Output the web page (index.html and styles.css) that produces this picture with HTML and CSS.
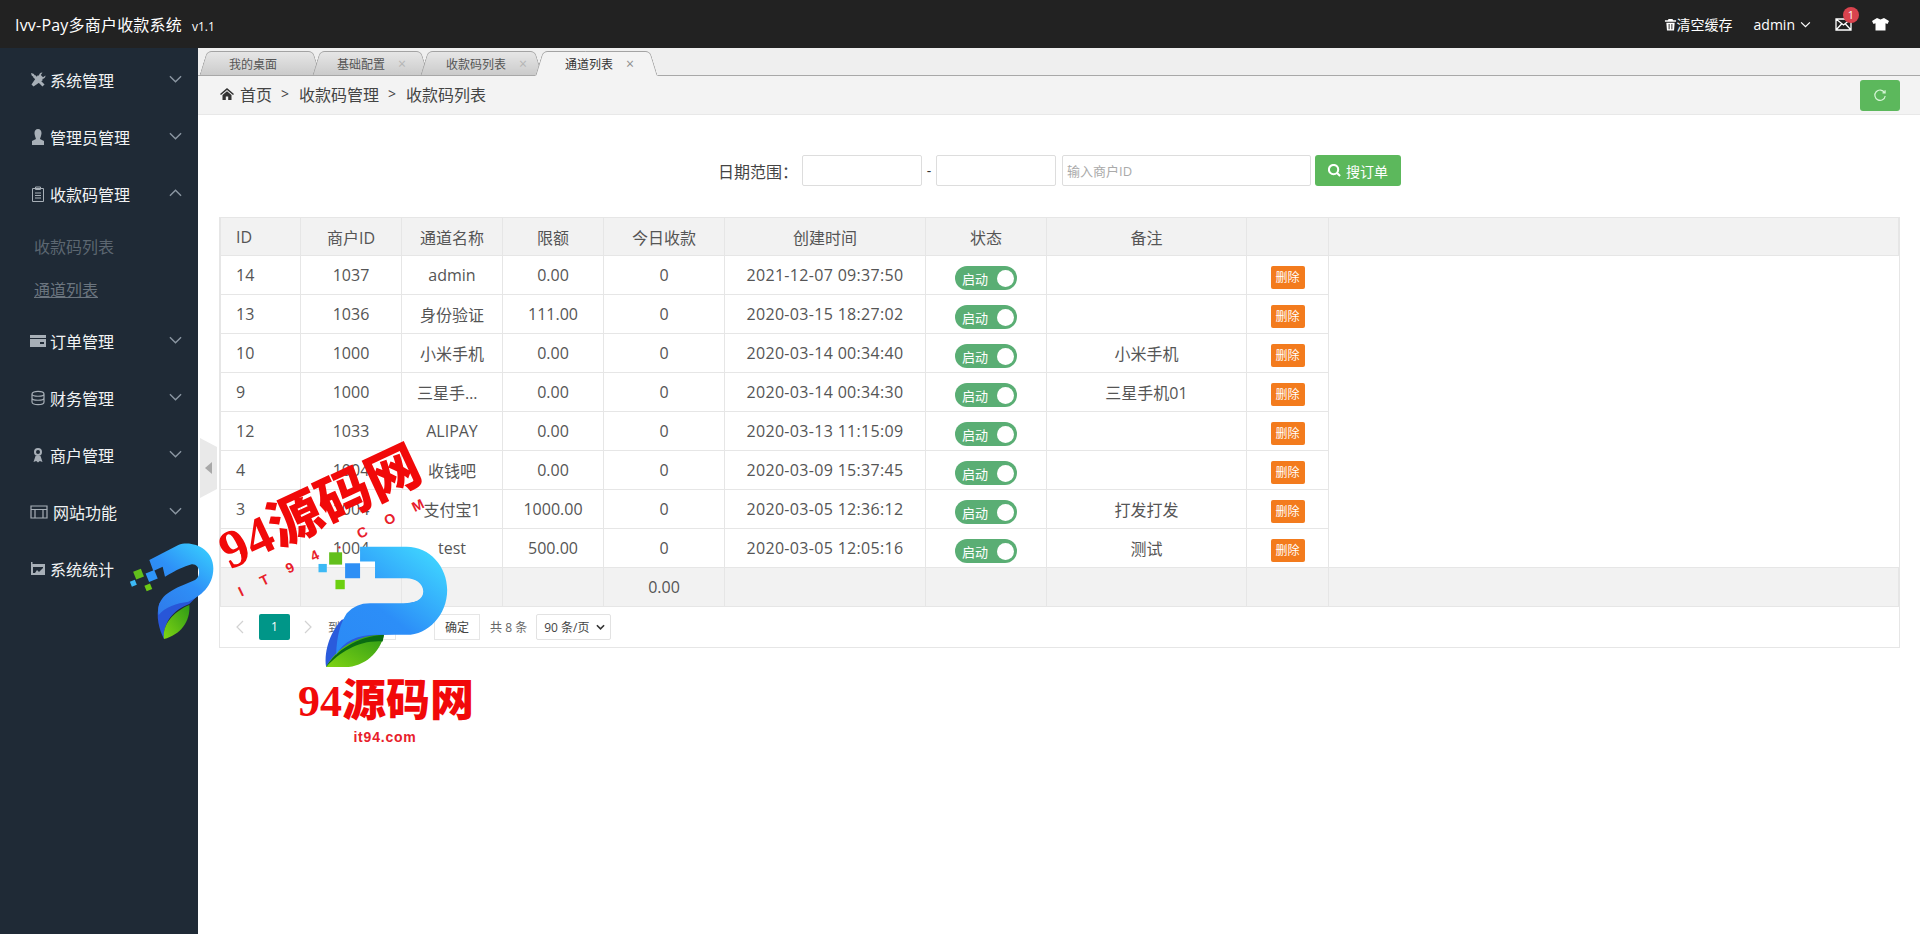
FILE: index.html
```html
<!DOCTYPE html>
<html lang="zh-CN">
<head>
<meta charset="utf-8">
<title>Ivv-Pay多商户收款系统</title>
<link rel="stylesheet" href="styles.css">
</head>
<body>
<header class="topbar">
  <div class="brand"><span class="brand-name">Ivv-Pay多商户收款系统</span><span class="brand-ver">v1.1</span></div>
  <div class="top-actions">
    <span class="top-cache"><svg class="top-ico" viewBox="0 0 14 14"><path d="M5 1h4l1 1.500h3V4H1V2.500h3zM2.500 5h9l-.7 8.500H3.200zM5 6.500v5.500h1V6.500zM8 6.500v5.500h1V6.500z" fill="#fff"/></svg>清空缓存</span>
    <span class="top-user">admin<svg class="top-chev" viewBox="0 0 12 8"><path d="M1 1.500l5 5 5-5" fill="none" stroke="#fff" stroke-width="1.400"/></svg></span>
    <span class="top-mail"><svg class="mail-ico" viewBox="0 0 17 13"><path d="M1 1h15v11H1zM1 1l7.500 6L16 1M1 12l5.500-6M16 12l-5.500-6" fill="none" stroke="#fff" stroke-width="1.300"/></svg><span class="badge">1</span></span>
    <svg class="shirt-ico" viewBox="0 0 17 14"><path d="M5 1l3.500 1.500L12 1l5 3-1.500 3-2-.8V13.500H3.500V6.200l-2 .8L0 4z" fill="#fff"/></svg>
  </div>
</header>
<div class="shell">
  <aside class="sidebar">
    <a class="nav-item"><svg class="nav-ico" viewBox="0 0 16 16"><path d="M4 4l9.500 9.500" fill="none" stroke="#a7afb7" stroke-width="3"/><path d="M13 8L3.500 14.500 1.500 12.500 8 3" fill="#a7afb7"/><path d="M15.500 3.500C15.500 6 13.500 7.500 11 7L9 5C8.500 2.500 10 .5 12.500.5L10.800 3 13 5.200zM1 1l2.500.7L5 3.500 3.500 5 1.700 3.500z" fill="#a7afb7"/></svg><span class="nav-text">系统管理</span><svg class="chev" viewBox="0 0 14 8"><path d="M1 1l6 6 6-6" /></svg></a>
    <a class="nav-item"><svg class="nav-ico" viewBox="0 0 16 16"><path d="M8 0c2.300 0 3.500 1.700 3.500 4S10 9.500 10 10l4 2v4H2v-4l4-2c0-.5-1.500-3.700-1.500-6S5.700 0 8 0z" fill="#a7afb7"/></svg><span class="nav-text">管理员管理</span><svg class="chev" viewBox="0 0 14 8"><path d="M1 1l6 6 6-6" /></svg></a>
    <a class="nav-item"><svg class="nav-ico" viewBox="0 0 16 16"><path d="M2.500 2.500h11v13h-11zM5.500 1h5v2.500h-5zM5 7h6M5 9.500h6M5 12h6" fill="none" stroke="#a7afb7" stroke-width="1"/></svg><span class="nav-text">收款码管理</span><svg class="chev" viewBox="0 0 14 8"><path d="M1 7l6-6 6 6" /></svg></a>
    <div class="subnav">
      <a class="sub-item">收款码列表</a>
      <a class="sub-item sub-current">通道列表</a>
    </div>
    <a class="nav-item"><svg class="nav-ico" viewBox="0 0 16 16"><path d="M0 2h16v3H0zM0 6h16v8H0zM10 9h4v2h-4z" fill="#a7afb7" fill-rule="evenodd"/></svg><span class="nav-text">订单管理</span><svg class="chev" viewBox="0 0 14 8"><path d="M1 1l6 6 6-6" /></svg></a>
    <a class="nav-item"><svg class="nav-ico" viewBox="0 0 16 16"><path d="M2 4c0-3.500 12-3.500 12 0v8c0 3.500-12 3.500-12 0zM2 4c0 3 12 3 12 0M2 8c0 3 12 3 12 0" fill="none" stroke="#a7afb7" stroke-width="1.200"/></svg><span class="nav-text">财务管理</span><svg class="chev" viewBox="0 0 14 8"><path d="M1 1l6 6 6-6" /></svg></a>
    <a class="nav-item"><svg class="nav-ico" viewBox="0 0 16 16"><path d="M8 1a4 4 0 1 1 0 8 4 4 0 0 1 0-8zM5.500 9L3.500 15l2.700-1L8 15.500 9.800 14l2.700 1-2-6" fill="#a7afb7"/><path d="M8 3a2 2 0 1 1 0 4 2 2 0 0 1 0-4z" fill="#1f2a36"/></svg><span class="nav-text">商户管理</span><svg class="chev" viewBox="0 0 14 8"><path d="M1 1l6 6 6-6" /></svg></a>
    <a class="nav-item"><svg class="nav-ico nav-ico-wide" viewBox="0 0 18 16"><path d="M1 2h16v12H1zM1 5.500h16M5 5.500V14M13 5.500V14" fill="none" stroke="#a7afb7" stroke-width="1.200"/></svg><span class="nav-text">网站功能</span><svg class="chev" viewBox="0 0 14 8"><path d="M1 1l6 6 6-6" /></svg></a>
    <a class="nav-item"><svg class="nav-ico" viewBox="0 0 16 16"><path d="M1 1h1.500v2H15v11H1zM3 6v6h2l2-3 2 2 4-4V6z" fill="#a7afb7" fill-rule="evenodd"/></svg><span class="nav-text">系统统计</span></a>
  </aside>
  <main class="main">
    <nav class="tabbar">
      <span class="tab tab-a"><span>我的桌面</span></span>
      <span class="tab tab-b"><span>基础配置</span><i class="tab-x">×</i></span>
      <span class="tab tab-c"><span>收款码列表</span><i class="tab-x">×</i></span>
      <span class="tab tab-d tab-active"><span>通道列表</span><i class="tab-x">×</i></span>
    </nav>
    <div class="crumbs">
      <svg class="home-ico" viewBox="0 0 14 12"><path d="M7 0l7 6-1 1-6-5-6 5-1-1zM2.500 7L7 3.300 11.500 7v5H8.200V8.500H5.800V12H2.500z" fill="#333"/></svg>
      <span>首页</span><span class="crumb-sep">&gt;</span><span>收款码管理</span><span class="crumb-sep">&gt;</span><span>收款码列表</span>
      <button class="refresh" type="button"><svg viewBox="0 0 14 14" class="refresh-ico"><path d="M11.500 4.500A5.200 5.200 0 1 0 12.200 8M9.500 4.800h2.600V2.200" fill="none" stroke="#d6f5d6" stroke-width="1.200"/></svg></button>
    </div>
    <div class="content">
      <form class="filter">
        <label class="filter-label">日期范围：</label>
        <input class="field field-date" type="text">
        <span class="filter-dash">-</span>
        <input class="field field-date" type="text">
        <input class="field field-id" type="text" placeholder="输入商户ID">
        <button class="search" type="button"><svg class="search-ico" viewBox="0 0 14 14"><path d="M6 1a5 5 0 1 1 0 10A5 5 0 0 1 6 1zM9.500 9.500L13 13" fill="none" stroke="#fff" stroke-width="2.200"/></svg>搜订单</button>
      </form>
      <div class="table-box">
        <table class="data">
          <colgroup><col class="c-id"><col class="c-mer"><col class="c-name"><col class="c-limit"><col class="c-today"><col class="c-time"><col class="c-state"><col class="c-note"><col class="c-act"><col></colgroup>
          <thead><tr><th class="left">ID</th><th>商户ID</th><th>通道名称</th><th>限额</th><th>今日收款</th><th>创建时间</th><th>状态</th><th>备注</th><th></th><th></th></tr></thead>
          <tbody>
            <tr><td class="left">14</td><td>1037</td><td>admin</td><td>0.00</td><td>0</td><td>2021-12-07 09:37:50</td><td><span class="switch"><em>启动</em><b></b></span></td><td></td><td><button class="del" type="button">删除</button></td><td class="blank"></td></tr>
            <tr><td class="left">13</td><td>1036</td><td>身份验证</td><td>111.00</td><td>0</td><td>2020-03-15 18:27:02</td><td><span class="switch"><em>启动</em><b></b></span></td><td></td><td><button class="del" type="button">删除</button></td><td class="blank"></td></tr>
            <tr><td class="left">10</td><td>1000</td><td>小米手机</td><td>0.00</td><td>0</td><td>2020-03-14 00:34:40</td><td><span class="switch"><em>启动</em><b></b></span></td><td>小米手机</td><td><button class="del" type="button">删除</button></td><td class="blank"></td></tr>
            <tr><td class="left">9</td><td>1000</td><td>三星手机01</td><td>0.00</td><td>0</td><td>2020-03-14 00:34:30</td><td><span class="switch"><em>启动</em><b></b></span></td><td>三星手机01</td><td><button class="del" type="button">删除</button></td><td class="blank"></td></tr>
            <tr><td class="left">12</td><td>1033</td><td>ALIPAY</td><td>0.00</td><td>0</td><td>2020-03-13 11:15:09</td><td><span class="switch"><em>启动</em><b></b></span></td><td></td><td><button class="del" type="button">删除</button></td><td class="blank"></td></tr>
            <tr><td class="left">4</td><td>1004</td><td>收钱吧</td><td>0.00</td><td>0</td><td>2020-03-09 15:37:45</td><td><span class="switch"><em>启动</em><b></b></span></td><td></td><td><button class="del" type="button">删除</button></td><td class="blank"></td></tr>
            <tr><td class="left">3</td><td>1004</td><td>支付宝1</td><td>1000.00</td><td>0</td><td>2020-03-05 12:36:12</td><td><span class="switch"><em>启动</em><b></b></span></td><td>打发打发</td><td><button class="del" type="button">删除</button></td><td class="blank"></td></tr>
            <tr><td class="left">1</td><td>1004</td><td>test</td><td>500.00</td><td>0</td><td>2020-03-05 12:05:16</td><td><span class="switch"><em>启动</em><b></b></span></td><td>测试</td><td><button class="del" type="button">删除</button></td><td class="blank"></td></tr>
          </tbody>
          <tfoot><tr><td></td><td></td><td></td><td></td><td>0.00</td><td></td><td></td><td></td><td></td><td></td></tr></tfoot>
        </table>
        <div class="pager">
          <svg class="pg-arrow pg-prev" viewBox="0 0 8 14"><path d="M7 1L1 7l6 6"/></svg>
          <span class="pg-current">1</span>
          <svg class="pg-arrow pg-next" viewBox="0 0 8 14"><path d="M1 1l6 6-6 6"/></svg>
          <span class="pg-text pg-to">到第</span>
          <input class="pg-input" type="text" value="1">
          <span class="pg-text">页</span>
          <button class="pg-ok" type="button">确定</button>
          <span class="pg-text pg-total">共 8 条</span>
          <span class="pg-size">90 条/页<svg class="pg-size-chev" viewBox="0 0 10 7"><path d="M1 1l4 4 4-4"/></svg></span>
        </div>
      </div>
    </div>
  </main>
</div>

<div class="handle"><svg class="handle-shape" viewBox="0 0 17 60"><path d="M0 0l17 9v42L0 60z" fill="#e9e9e9"/><path d="M12 24v12l-7-6z" fill="#a8a8a8"/></svg></div>

<div class="wm-title">94源码网</div>
<div class="wm-sub">IT94.COM</div>

<svg class="wm-logo-small" viewBox="0 0 330 345">
  <defs>
    <linearGradient id="gs" x1="0.9" y1="0" x2="0.2" y2="1"><stop offset="0" stop-color="#38cfff"/><stop offset=".5" stop-color="#2e90f7"/><stop offset="1" stop-color="#2f7bea"/></linearGradient>
    <linearGradient id="gl" x1="0" y1="1" x2="1" y2="0"><stop offset="0" stop-color="#7fd413"/><stop offset="1" stop-color="#2e9a17"/></linearGradient>
    <linearGradient id="gb" x1="0.8" y1="0" x2="0" y2="1"><stop offset="0" stop-color="#3fd4ff"/><stop offset=".55" stop-color="#2c8ef8"/><stop offset="1" stop-color="#2b8af5"/></linearGradient>
  </defs>
  <path d="M118 205C106 245 118 285 132 312 130 260 160 225 208 207L235 180 210 150z" fill="#2856d8"/>
  <path d="M132 312C125 270 160 230 208 210 212 260 180 300 132 312z" fill="url(#gl)"/>
  <path d="M88 75L175 30C215 15 280 40 280 100 280 155 240 185 205 200 170 205 135 215 116 240 108 195 140 170 190 150L225 135C245 125 240 85 215 88 190 95 170 105 135 125L128 95 100 108z" fill="url(#gs)"/>
  <rect x="43" y="105" width="25" height="25" transform="rotate(-22 55 117)" fill="#62bf1c"/>
  <rect x="81" y="109" width="28" height="28" transform="rotate(-22 95 123)" fill="#2e95f7"/>
  <rect x="32" y="137" width="16" height="16" transform="rotate(-22 40 145)" fill="#3cb9f5"/>
  <rect x="76" y="148" width="18" height="18" transform="rotate(-22 85 157)" fill="#6cc814"/>
</svg>

<svg class="wm-logo-big" viewBox="300 60 450 400">
  <path d="M348 442C340 390 365 330 395 300L640 240 600 340 520 345z" fill="#2a5bdc"/>
  <path d="M348 442C380 385 440 345 522 345 510 400 460 445 400 442z" fill="url(#gl)"/>
  <path d="M348 442C375 395 440 350 522 345L518 365C450 360 390 395 348 442z" fill="#0a6b12"/>
  <path d="M450 80H590C660 80 712 140 712 210 712 285 655 345 590 345H500C440 345 400 365 378 405 380 350 390 310 410 280 430 260 450 250 480 250H580C615 250 640 240 640 215 640 190 615 175 590 175H495V125H450z" fill="url(#gb)"/>
  <rect x="357" y="97" width="39" height="37" fill="#62bf1c"/>
  <rect x="325" y="132" width="25" height="25" fill="#3cb9f5"/>
  <rect x="405" y="130" width="45" height="45" fill="#2e8ff5"/>
  <rect x="376" y="180" width="28" height="28" fill="#6cd010"/>
</svg>

<div class="wm-name">94源码网</div>
<div class="wm-url">it94.com</div>
</body>
</html>
```
FILE: styles.css
```css
* { box-sizing: border-box; }
html, body { margin: 0; height: 934px; overflow: hidden; }
body {
  position: relative;
  background: #fff;
  color: #333;
  font-family: "Open Sans", "Noto Sans CJK SC", sans-serif;
  font-size: 16px;
}

/* top bar */
.topbar {
  height: 48px;
  background: #222;
  color: #fff;
  display: flex;
  align-items: center;
  justify-content: space-between;
  padding: 0 31px 0 15px;
}
.brand { display: flex; align-items: baseline; }
.brand-name { font-size: 16px; letter-spacing: .2px; }
.brand-ver { font-size: 12px; margin-left: 10px; }
.top-actions { display: flex; align-items: center; font-size: 14px; }
.top-cache { display: flex; align-items: center; }
.top-ico { width: 13px; height: 13px; margin-right: 0; }
.top-user { display: flex; align-items: center; margin-left: 21px; }
.top-chev { width: 11px; height: 7px; margin-left: 5px; }
.top-mail { position: relative; display: flex; margin-left: 24px; }
.mail-ico { width: 17px; height: 13px; }
.badge {
  position: absolute;
  top: -11px;
  left: 8px;
  width: 16px;
  height: 16px;
  line-height: 16px;
  border-radius: 50%;
  background: #d9434e;
  color: #fff;
  font-size: 11px;
  text-align: center;
}
.shirt-ico { width: 17px; height: 14px; margin-left: 20px; }

/* shell */
.shell { display: flex; height: 886px; }
.sidebar {
  width: 198px;
  flex: none;
  background: #1f2a36;
  padding-top: 3px;
  color: #fff;
}
.nav-item {
  height: 57px;
  display: flex;
  align-items: center;
  padding: 0 16px 0 30px;
}
.nav-ico { width: 16px; height: 16px; flex: none; margin-right: 4px; }
.nav-ico-wide { width: 18px; margin-right: 5px; }
.nav-text { flex: 1; color: #f1f3f4; }
.chev { width: 13px; height: 8px; fill: none; stroke: #8b97a2; stroke-width: 1.500; margin-top: -2px; }
.subnav { padding: 4px 0 0; }
.sub-item { display: block; height: 43px; line-height: 43px; padding-left: 34px; color: #5c6771; }
.sub-current { color: #6b757f; text-decoration: underline; }

/* tabs */
.main { flex: 1; min-width: 0; display: flex; flex-direction: column; }
.tabbar {
  height: 28px;
  background: #efefef;
  border-bottom: 1px solid #a8a8a8;
  display: flex;
  align-items: flex-end;
  padding-left: 4px;
}
.tab {
  position: relative;
  z-index: 1;
  height: 25px;
  margin-bottom: -1px;
  display: flex;
  align-items: center;
  font-size: 12px;
  color: #555;
}
.tab::before, .tab::after {
  content: "";
  position: absolute;
  top: 0;
  bottom: 0;
  width: 55%;
  z-index: -1;
  background: linear-gradient(#e6e6e6, #cbcbcb);
  border-top: 1px solid #a3a3a3;
  border-bottom: 1px solid #a8a8a8;
}
.tab::before {
  left: 1px;
  transform: skewX(-17deg);
  border-left: 1px solid #a3a3a3;
  border-top-left-radius: 5px;
}
.tab::after {
  right: 1px;
  transform: skewX(17deg);
  border-right: 1px solid #a3a3a3;
  border-top-right-radius: 5px;
}
.tab-a { width: 116px; padding-left: 27px; }
.tab-b { width: 110px; padding-left: 22px; margin-left: -3px; }
.tab-c { width: 117px; padding-left: 23px; margin-left: -2px; }
.tab-d { width: 117px; padding-left: 27px; margin-left: -2px; }
.tab-active { z-index: 2; color: #333; }
.tab-active::before, .tab-active::after { background: #f3f3f3; border-bottom-color: #f3f3f3; }
.tab-x { font-style: normal; font-size: 14px; color: #b5b5b5; margin-left: 13px; }
.tab-active .tab-x { color: #8e8e8e; }

/* breadcrumb */
.crumbs {
  height: 39px;
  background: #f3f3f3;
  border-bottom: 1px solid #e8e8e8;
  display: flex;
  align-items: center;
  padding: 0 20px 3px 22px;
  color: #444;
}
.home-ico { width: 14px; height: 12px; margin-right: 6px; }
.crumb-sep { margin: 0 10px 0 9px; font-size: 14px; }
.refresh {
  margin: 0 0 -3px auto;
  width: 40px;
  height: 31px;
  border: 0;
  border-radius: 3px;
  background: #5cb85c;
  display: flex;
  align-items: center;
  justify-content: center;
}
.refresh-ico { width: 14px; height: 14px; }

/* filter */
.content { flex: 1; padding: 40px 20px 0 21px; }
.filter { display: flex; align-items: center; height: 31px; padding-left: 499px; font-size: 14px; }
.filter-label { width: 84px; color: #444; font-size: 16px; white-space: nowrap; }
.field {
  height: 31px;
  border: 1px solid #ddd;
  border-radius: 2px;
  background: #fff;
  font: inherit;
  font-size: 13px;
  padding: 0 4px;
  outline: 0;
}
.field::placeholder { color: #aaa; }
.field-date { width: 120px; }
.filter-dash { width: 14px; text-align: center; }
.field-id { width: 249px; margin-left: 6px; }
.search {
  margin-left: 4px;
  width: 86px;
  height: 31px;
  border: 0;
  border-radius: 3px;
  background: #5cb85c;
  color: #fff;
  font: inherit;
  font-size: 14px;
  display: flex;
  align-items: center;
  justify-content: center;
}
.search-ico { width: 13px; height: 13px; margin-right: 5px; }

/* table */
.table-box { margin-top: 31px; border: 1px solid #e6e6e6; border-top: 0; }
.data { width: 100%; table-layout: fixed; border-collapse: collapse; color: #555; }
.c-id { width: 80px; }
.c-mer, .c-name, .c-limit { width: 101px; }
.c-today { width: 121px; }
.c-time { width: 201px; }
.c-state { width: 121px; }
.c-note { width: 200px; }
.c-act { width: 82px; }
.data tbody tr, .data tfoot tr { height: 39px; }
.data thead tr { height: 38px; }
.data th, .data td {
  border: 1px solid #e6e6e6;
  padding: 0 15px;
  font-weight: 400;
  text-align: center;
  white-space: nowrap;
  overflow: hidden;
  text-overflow: ellipsis;
}
.data td:nth-child(6) { letter-spacing: .32px; }
.data th { background: #f2f2f2; }
.data .left { text-align: left; }
.data tfoot td { background: #f2f2f2; }
.data .blank { border-top: 0; border-bottom: 0; border-right: 0; }
.switch {
  display: inline-flex;
  align-items: center;
  justify-content: space-between;
  vertical-align: middle;
  width: 62px;
  height: 24px;
  margin-top: 6px;
  border-radius: 12px;
  background: #5aae74;
  padding: 0 3px 0 7px;
}
.switch em { font-style: normal; font-size: 13px; color: #fff; line-height: 24px; padding-top: 2px; }
.switch b { width: 17px; height: 17px; border-radius: 50%; background: #fff; }
.del {
  width: 34px;
  height: 23px;
  margin-top: 4px;
  border: 0;
  border-radius: 2px;
  padding: 0;
  background: #f37b1d;
  color: #fff;
  font: inherit;
  font-size: 12px;
  vertical-align: middle;
}

/* pager */
.pager { height: 40px; display: flex; align-items: center; padding-left: 11px; font-size: 12px; color: #666; }
.pg-arrow { width: 8px; height: 14px; fill: none; stroke: #d2d2d2; stroke-width: 1.200; }
.pg-prev { margin-left: 5px; }
.pg-current {
  width: 31px;
  height: 26px;
  margin-left: 15px;
  line-height: 26px;
  text-align: center;
  background: #009688;
  color: #fff;
  border-radius: 2px;
}
.pg-next { margin-left: 14px; }
.pg-text { white-space: nowrap; }
.pg-to { margin-left: 16px; }
.pg-input { width: 40px; height: 26px; margin: 0 7px 0 4px; border: 1px solid #e6e6e6; text-align: center; font: inherit; }
.pg-ok { width: 46px; height: 26px; margin-left: 19px; border: 1px solid #e6e6e6; background: #fff; font: inherit; color: #444; padding: 0; }
.pg-total { margin-left: 10px; }
.pg-size {
  width: 75px;
  height: 26px;
  margin-left: 9px;
  border: 1px solid #e2e2e2;
  border-radius: 2px;
  display: flex;
  align-items: center;
  justify-content: space-between;
  padding: 0 5px 0 7px;
  color: #444;
}
.pg-size-chev { width: 9px; height: 7px; fill: none; stroke: #333; stroke-width: 1.800; }

/* overlays */
.handle { position: absolute; left: 200px; top: 438px; width: 17px; height: 60px; }
.handle-shape { display: block; width: 17px; height: 60px; }
.wm-title {
  position: absolute;
  left: 190px;
  top: 475px;
  width: 260px;
  text-align: center;
  font-family: "Liberation Serif", "Noto Sans CJK SC", serif;
  font-weight: 900;
  font-size: 54px;
  line-height: 66px;
  color: #f10909;
  white-space: nowrap;
  transform: rotate(-25deg);
}
.wm-sub {
  position: absolute;
  left: 220px;
  top: 533px;
  width: 240px;
  text-align: center;
  font-family: "Liberation Sans", sans-serif;
  font-weight: 700;
  font-size: 14px;
  line-height: 20px;
  letter-spacing: 20px;
  color: #e8202b;
  white-space: nowrap;
  transform: rotate(-26deg);
}
.wm-logo-small { position: absolute; left: 120px; top: 535px; width: 110px; height: 115px; }
.wm-logo-big { position: absolute; left: 310px; top: 540px; width: 150px; height: 133px; }
.wm-name {
  position: absolute;
  left: 296px;
  top: 673px;
  width: 180px;
  text-align: center;
  font-family: "Liberation Serif", "Noto Sans CJK SC", serif;
  font-weight: 900;
  font-size: 44px;
  line-height: 58px;
  color: #f10909;
  white-space: nowrap;
}
.wm-url {
  position: absolute;
  left: 340px;
  top: 727px;
  width: 90px;
  text-align: center;
  font-family: "Liberation Sans", sans-serif;
  font-weight: 700;
  font-size: 14px;
  letter-spacing: .8px;
  line-height: 20px;
  color: #e8202b;
}
```
